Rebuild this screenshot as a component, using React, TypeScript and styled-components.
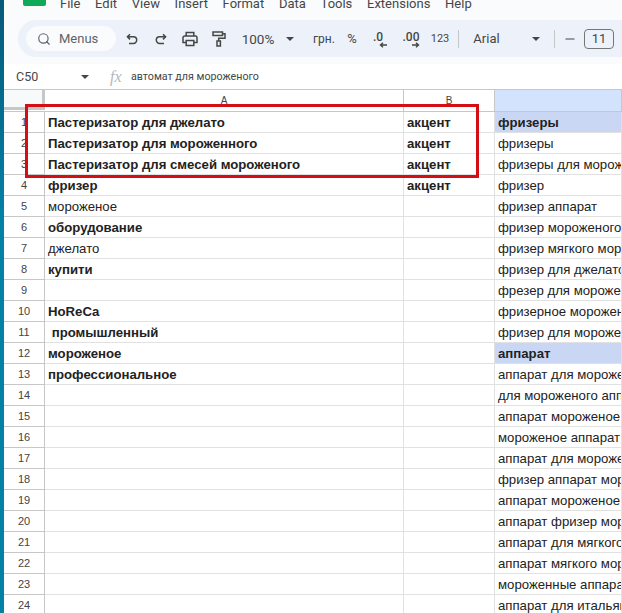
import styled, { createGlobalStyle } from "styled-components";
import { Search, Minus } from "lucide-react";

const Global = createGlobalStyle`
    html, body {
        margin: 0;
        padding: 0;
        overflow: hidden;
        background: #fff;
    }
`;

const Page = styled.div`
    width: 622px;
    height: 613px;
    display: flex;
    overflow: hidden;
    position: relative;
    font-family: "Liberation Sans", Arial, sans-serif;
`;

const Strip = styled.div`
    width: 4px;
    flex: none;
    background: linear-gradient(#07597a, #0580a6 35%);
`;

const Main = styled.div`
    flex: 1;
    min-width: 0;
    display: flex;
    flex-direction: column;
`;

const Top = styled.div`
    background: #f9fbfd;
    height: 64px;
    flex: none;
`;

const MenuBar = styled.div`
    height: 20px;
    display: flex;
    align-items: flex-end;
    padding-bottom: 9px;
    box-sizing: border-box;
    font-family: Roboto, sans-serif;
    font-size: 13px;
    color: #444746;
`;

const Logo = styled.div`
    width: 23px;
    height: 6px;
    margin: 0 14px 0 19px;
    align-self: flex-start;
    background: #0fa958;
    border-radius: 0 0 2px 2px;
`;

const MenuItem = styled.span`
    margin-right: 14.7px;
    line-height: 14px;
    white-space: nowrap;
`;

const Toolbar = styled.div`
    height: 37px;
    margin-left: 14px;
    padding-left: 8px;
    width: 640px;
    border-radius: 18px 0 0 18px;
    background: #edf2fa;
    display: flex;
    align-items: center;
    color: #444746;
    font-family: Roboto, sans-serif;
    white-space: nowrap;
`;

const SearchPill = styled.div`
    width: 90px;
    height: 25px;
    flex: none;
    box-sizing: border-box;
    padding-left: 11px;
    border-radius: 13px;
    background: #f9fbfd;
    display: flex;
    align-items: center;
    gap: 8px;
    font-size: 13px;
    color: #5f6368;
    margin-right: 1px;
`;

const ToolIcon = styled.span`
    width: 29px;
    flex: none;
    display: flex;
    justify-content: center;
    align-items: center;
`;

const ToolSvg = styled.svg`
    fill: none;
    stroke: #444746;
    stroke-width: 1.5;
`;

const ToolText = styled.span<{ $w: number; $size?: number; $left?: number }>`
    width: ${(p) => p.$w}px;
    margin-left: ${(p) => p.$left ?? 0}px;
    flex: none;
    text-align: center;
    font-size: ${(p) => p.$size ?? 13}px;
`;

const Caret = styled.span<{ $left?: number }>`
    width: 0;
    height: 0;
    flex: none;
    margin-left: ${(p) => p.$left ?? 0}px;
    border-left: 4px solid transparent;
    border-right: 4px solid transparent;
    border-top: 4px solid #444746;
`;

const Divider = styled.span<{ $left: number }>`
    width: 1px;
    height: 18px;
    flex: none;
    margin-left: ${(p) => p.$left}px;
    background: #c7c7c7;
`;

const Decimal = styled.span<{ $w: number }>`
    width: ${(p) => p.$w}px;
    flex: none;
    display: flex;
    flex-direction: column;
    align-items: center;
    font-size: 12px;
    font-weight: 500;
    line-height: 10px;
    margin-top: 2px;
`;

const DecimalArrow = styled.svg<{ $flip?: boolean }>`
    width: 8px;
    height: 6px;
    margin-left: 9px;
    transform: ${(p) => (p.$flip ? "scaleX(-1)" : "none")};
`;

const FontSize = styled.span`
    width: 30px;
    height: 20px;
    flex: none;
    box-sizing: border-box;
    border: 1px solid #747775;
    border-radius: 4px;
    display: flex;
    align-items: center;
    justify-content: center;
    font-size: 13px;
    color: #444746;
`;

const FormulaBar = styled.div`
    height: 25px;
    flex: none;
    background: #fff;
    display: flex;
    align-items: center;
    font-family: Roboto, sans-serif;
    color: #444746;
`;

const CellName = styled.span`
    width: 77px;
    padding-left: 12px;
    box-sizing: border-box;
    font-size: 12.5px;
    flex: none;
`;

const FxLabel = styled.span`
    font-family: "Liberation Serif", serif;
    font-style: italic;
    font-size: 16px;
    color: #b4b7ba;
    width: 21px;
    margin-left: 21px;
    flex: none;
`;

const FormulaText = styled.span`
    font-size: 10.7px;
    margin-bottom: 1px;
`;

const Sheet = styled.div`
    flex: 1;
    display: flex;
    flex-direction: column;
    border-top: 1px solid #c7c7c7;
    overflow: hidden;
`;

const HeaderRow = styled.div`
    display: grid;
    grid-template-columns: 41px 359px 91px 1fr;
    height: 22px;
    flex: none;
    box-sizing: border-box;
    border-bottom: 1px solid #c7c7c7;
`;

const Corner = styled.div`
    background: #f8f9fa;
    box-sizing: border-box;
    height: 20px;
    border-right: 3px solid #c7c7c7;
    border-bottom: 3px solid #c7c7c7;
`;

const ColHead = styled.div<{ $active?: boolean }>`
    background: ${(p) => (p.$active ? "#d3e3fd" : "#fff")};
    border-right: 1px solid #c7c7c7;
    font-size: 10px;
    color: #444;
    display: flex;
    align-items: flex-end;
    justify-content: center;
    padding-bottom: 5px;
`;

const Row = styled.div`
    display: grid;
    grid-template-columns: 41px 359px 91px 1fr;
    height: 21px;
    flex: none;
`;

const RowHead = styled.div`
    box-sizing: border-box;
    border-right: 1px solid #c7c7c7;
    border-bottom: 1px solid #c7c7c7;
    background: #fff;
    font-size: 11px;
    color: #444;
    display: flex;
    align-items: center;
    justify-content: center;
`;

const Cell = styled.div<{ $bold?: boolean; $fill?: boolean }>`
    box-sizing: border-box;
    border-right: 1px solid #e1e1e1;
    border-bottom: 1px solid #e1e1e1;
    padding-left: 3px;
    font-size: 13.2px;
    font-weight: ${(p) => (p.$bold ? 700 : 400)};
    background: ${(p) => (p.$fill ? "#c9d7f5" : "#fff")};
    color: #222;
    line-height: 22px;
    white-space: pre;
    overflow: hidden;
`;

const Highlight = styled.div`
    position: absolute;
    left: 25px;
    top: 104px;
    width: 454px;
    height: 74px;
    box-sizing: border-box;
    border: 3px solid #d40f14;
    pointer-events: none;
`;

const menus = ["File", "Edit", "View", "Insert", "Format", "Data", "Tools", "Extensions", "Help"];

const colA = [
    ["Пастеризатор для джелато", 1],
    ["Пастеризатор для мороженного", 1],
    ["Пастеризатор для смесей мороженого", 1],
    ["фризер", 1],
    ["мороженое", 0],
    ["оборудование", 1],
    ["джелато", 0],
    ["купити", 1],
    ["", 0],
    ["HoReCa", 1],
    [" промышленный", 1],
    ["мороженое", 1],
    ["профессиональное", 1],
] as const;

const colC = [
    "фризеры",
    "фризеры",
    "фризеры для мороженого",
    "фризер",
    "фризер аппарат",
    "фризер мороженого",
    "фризер мягкого мороженого",
    "фризер для джелато",
    "фрезер для мороженого",
    "фризерное мороженое",
    "фризер для мороженого",
    "аппарат",
    "аппарат для мороженого",
    "для мороженого аппарат",
    "аппарат мороженое",
    "мороженое аппарат",
    "аппарат для мороженого",
    "фризер аппарат мороженого",
    "аппарат мороженое",
    "аппарат фризер мороженого",
    "аппарат для мягкого мороженого",
    "аппарат мягкого мороженого",
    "мороженные аппараты",
    "аппарат для итальянского мороженого",
];

const SmallArrow = ({ flip }: { flip?: boolean }) => (
    <DecimalArrow $flip={flip} viewBox="0 0 8 6">
        <path d="M8 3H2M4 .8 1.5 3 4 5.2" fill="none" stroke="#444746" strokeWidth="1.4" />
    </DecimalArrow>
);

const UndoIcon = () => (
    <ToolSvg width="12" height="12" viewBox="0 0 12 12">
        <path d="M4 1.2 1.4 3.8 4 6.4M1.4 3.8H7.4a3.2 3.2 0 0 1 0 6.6H3" />
    </ToolSvg>
);

const RedoIcon = () => (
    <ToolSvg width="12" height="12" viewBox="0 0 12 12">
        <path d="M8 1.2 10.6 3.8 8 6.4M10.6 3.8H4.6a3.2 3.2 0 0 0 0 6.6H9" />
    </ToolSvg>
);

const PrintIcon = () => (
    <ToolSvg width="16" height="16" viewBox="0 0 16 16">
        <path d="M4.2 5V1.6h7.6V5M4.2 11.6H1V6.6A1.6 1.6 0 0 1 2.6 5h10.8A1.6 1.6 0 0 1 15 6.6v5h-3.2M4.2 9.4h7.6v5.2H4.2z" />
    </ToolSvg>
);

const RollerIcon = () => (
    <ToolSvg width="14" height="16" viewBox="0 0 14 16">
        <path d="M1 1h9.5v3.6H1zM10.5 2.8H13v4.4H6.7V10M5 10h3.4v5H5z" />
    </ToolSvg>
);

const App = () => {
    return (
        <Page>
            <Global />
            <Strip />
            <Main>
                <Top>
                    <MenuBar>
                        <Logo />
                        {menus.map((m) => (
                            <MenuItem key={m}>{m}</MenuItem>
                        ))}
                    </MenuBar>
                    <Toolbar>
                        <SearchPill>
                            <Search size={14} strokeWidth={2} />
                            Menus
                        </SearchPill>
                        <ToolIcon><UndoIcon /></ToolIcon>
                        <ToolIcon><RedoIcon /></ToolIcon>
                        <ToolIcon><PrintIcon /></ToolIcon>
                        <ToolIcon><RollerIcon /></ToolIcon>
                        <ToolText $w={50} $size={13.5}>100%</ToolText>
                        <Caret $left={3} />
                        <ToolText $w={36} $left={12} $size={12}>грн.</ToolText>
                        <ToolText $w={20}>%</ToolText>
                        <Decimal $w={32}>.0<SmallArrow /></Decimal>
                        <Decimal $w={34}>.00<SmallArrow flip /></Decimal>
                        <ToolText $w={24} $size={11}>123</ToolText>
                        <Divider $left={6} />
                        <ToolText $w={55}>Arial</ToolText>
                        <Caret $left={18} />
                        <Divider $left={14} />
                        <ToolIcon><Minus size={14} /></ToolIcon>
                        <FontSize>11</FontSize>
                    </Toolbar>
                </Top>
                <FormulaBar>
                    <CellName>C50</CellName>
                    <Caret />
                    <FxLabel>fx</FxLabel>
                    <FormulaText>автомат для мороженого</FormulaText>
                </FormulaBar>
                <Sheet>
                    <HeaderRow>
                        <Corner />
                        <ColHead>A</ColHead>
                        <ColHead>B</ColHead>
                        <ColHead $active />
                    </HeaderRow>
                    {colC.map((c, i) => {
                        const a = colA[i];
                        return (
                            <Row key={i}>
                                <RowHead>{i + 1}</RowHead>
                                <Cell $bold={a ? a[1] === 1 : false}>{a ? a[0] : ""}</Cell>
                                <Cell $bold>{i < 4 ? "акцент" : ""}</Cell>
                                <Cell $bold={i === 0 || i === 11} $fill={i === 0 || i === 11}>{c}</Cell>
                            </Row>
                        );
                    })}
                </Sheet>
            </Main>
            <Highlight />
        </Page>
    );
};

export default App;
